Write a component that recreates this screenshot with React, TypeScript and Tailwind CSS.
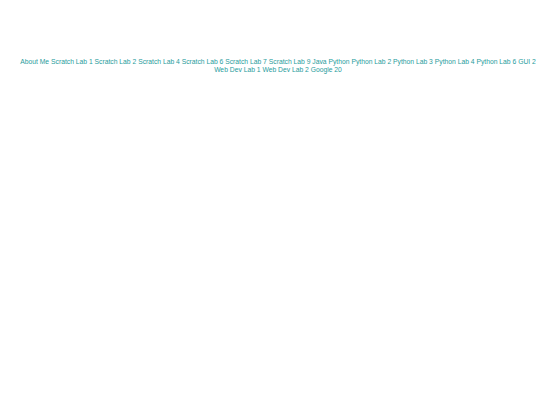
const links = [
  "About Me",
  "Scratch Lab 1",
  "Scratch Lab 2",
  "Scratch Lab 4",
  "Scratch Lab 6",
  "Scratch Lab 7",
  "Scratch Lab 9",
  "Java",
  "Python",
  "Python Lab 2",
  "Python Lab 3",
  "Python Lab 4",
  "Python Lab 6",
  "GUI 2",
  "Web Dev Lab 1",
  "Web Dev Lab 2",
  "Google 20",
];

export default function App() {
  return (
    <div className="min-h-[405px] w-[540px] bg-white pl-[18px] pr-[2px] pt-[58px]">
      <nav className="text-center text-[6.75px] leading-[8px] text-[#1f9c9c] [font-family:'Liberation_Sans',Arial,sans-serif]">
        {links.map((l, i) => (
          <span key={l}>
            <a href="#">{l}</a>
            {i < links.length - 1 ? " " : ""}
          </span>
        ))}
      </nav>
    </div>
  );
}
